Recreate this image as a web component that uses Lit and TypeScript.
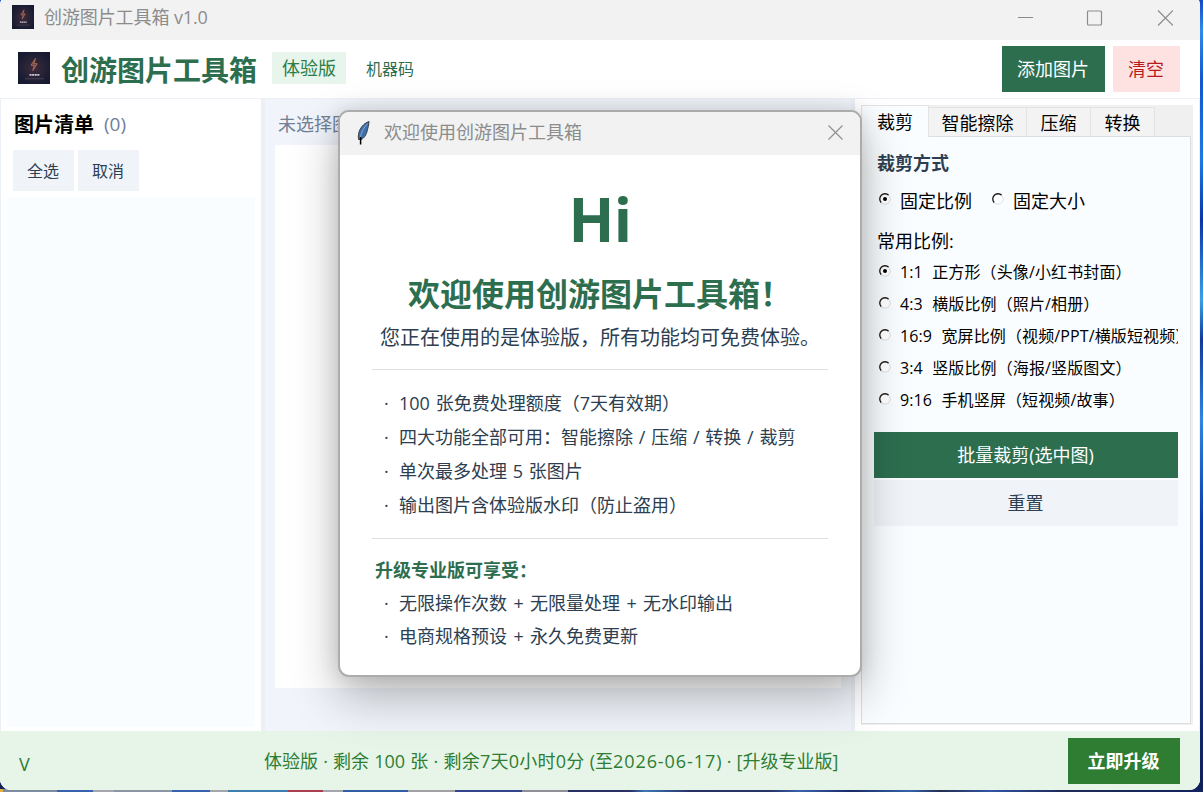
import { LitElement, html, css, svg } from "lit";
import { customElement, property } from "lit/decorators.js";

@customElement("app-logo")
class AppLogo extends LitElement {
  static styles = css`
    :host { display: block; }
    svg { display: block; width: 100%; height: 100%; }
  `;
  render() {
    return html`<svg viewBox="0 0 32 32" preserveAspectRatio="none">
      <defs><radialGradient id="g" r=".6"><stop offset="0" stop-color="#3d2b3d"/><stop offset="1" stop-color="#141a30"/></radialGradient></defs>
      <rect width="32" height="32" fill="url(#g)"/>
      <path d="M17.5 6.5 13 13.2 16.3 13.4 14.8 18.6 19.2 11.8 15.8 11.6Z" fill="#6d4142" stroke="#ad6c50" stroke-width="1"/>
      <path d="M11.5 22.8h10" stroke="#cfc8cc" stroke-width="1.7" stroke-dasharray="2.1 .5"/>
      <path d="M7 26.8h19" stroke="#5a5060" stroke-width=".7"/>
    </svg>`;
  }
}

@customElement("radio-option")
class RadioOption extends LitElement {
  @property({ type: Boolean }) checked = false;
  static styles = css`
    :host { display: flex; align-items: center; white-space: pre; }
    svg { width: 12px; height: 12px; flex: none; margin: 0 9px 4px 0; }
  `;
  render() {
    return html`<svg viewBox="0 0 12 12">
        <circle cx="6" cy="6" r="5.2" fill="#fff"/>
        <path d="M2.3 9.7A5.2 5.2 0 0 1 9.7 2.3" fill="none" stroke="#111" stroke-width="1.3"/>
        <path d="M9.7 2.3A5.2 5.2 0 0 1 2.3 9.7" fill="none" stroke="#dcdfe2" stroke-width="1"/>
        ${this.checked ? svg`<circle cx="6" cy="6" r="2" fill="#000"/>` : null}
      </svg><slot></slot>`;
  }
}

@customElement("welcome-dialog")
class WelcomeDialog extends LitElement {
  static styles = css`
    :host { display: flex; flex-direction: column; box-sizing: border-box; border: 2px solid #acacac; border-radius: 11px; background: #fff; overflow: hidden; color: #2c3e50; font-size: 18px; }
    .bar { display: flex; align-items: center; height: 43px; background: #f2f2f2; color: #8c8c8c; padding: 0 17px 2px 14px; box-sizing: border-box; flex: none; }
    .feather { width: 18px; height: 26px; margin-right: 12px; }
    .bar span { flex: 1; }
    .content { padding: 32px 32px 0; display: flex; flex-direction: column; }
    .hi { font-size: 60px; font-weight: 700; line-height: 64px; text-align: center; color: #2d6e4f; letter-spacing: -.5px; }
    h1 { margin: 22px 0 0; font-size: 32px; line-height: 42px; font-weight: 700; text-align: center; color: #2d6e4f; white-space: nowrap; }
    .sub { font-size: 20px; line-height: 28px; margin-top: 9px; text-align: center; white-space: nowrap; }
    .rule { height: 1px; background: #dfdfdf; }
    .rule.a { margin-top: 17px; }
    .rule.b { margin-top: 16px; }
    ul { list-style: none; margin: 16px 0 0; padding: 0 0 0 12px; line-height: 34px; word-spacing: 1.1px; }
    li { display: flex; white-space: pre; }
    li::before { content: "·"; width: 15px; }
    h2 { font-size: 18px; line-height: 34px; margin: 14px 0 0 3px; color: #2d6e4f; }
    ul.pro { margin-top: 0; line-height: 33px; word-spacing: 1.7px; }
  `;
  render() {
    return html`
      <div class="bar">
        <svg class="feather" viewBox="0 0 18 26">
          <path d="M15 1.5C11.5 2.5 8 5.5 6 9.5 4.4 12.8 4 16.5 4.6 19.5L7.2 19.5C10 18.5 12.4 14.5 13.3 10.5 14 7.5 14.8 5 15 1.5Z" fill="#3d6fae" stroke="#3a4048" stroke-width="1"/>
          <path d="M13.5 4C10.5 6.5 7.2 12 6.2 18" fill="none" stroke="#9fb6cf" stroke-width=".8"/>
          <path d="M6.6 17v7.5" fill="none" stroke="#000" stroke-width="1.5"/>
        </svg>
        <span>欢迎使用创游图片工具箱</span>
        <svg width="15" height="15" viewBox="0 0 15 15"><path d="M.5.5l14 14M14.5.5l-14 14" stroke="#909090" stroke-width="1.2"/></svg>
      </div>
      <div class="content">
        <div class="hi">Hi</div>
        <h1>欢迎使用创游图片工具箱！</h1>
        <div class="sub">您正在使用的是体验版，所有功能均可免费体验。</div>
        <div class="rule a"></div>
        <ul>
          <li>100 张免费处理额度（7天有效期）</li>
          <li>四大功能全部可用：智能擦除 / 压缩 / 转换 / 裁剪</li>
          <li>单次最多处理 5 张图片</li>
          <li>输出图片含体验版水印（防止盗用）</li>
        </ul>
        <div class="rule b"></div>
        <h2>升级专业版可享受：</h2>
        <ul class="pro">
          <li>无限操作次数 + 无限量处理 + 无水印输出</li>
          <li>电商规格预设 + 永久免费更新</li>
        </ul>
      </div>`;
  }
}

@customElement("app-root")
class AppRoot extends LitElement {
  static styles = css`
    :host { display: block; position: relative; width: 1203px; height: 792px; overflow: hidden; font-family: "Open Sans", "Noto Sans CJK SC", sans-serif; font-size: 18px; line-height: 1.36; color: #000;
      background: linear-gradient(90deg, #e0b040 0 3px, #7d8ba0 3px 57px, #3563b0 57px 93px, #a5a5ad 93px 114px, #8b95a5 114px 172px, #3563b0 172px 210px, #a5a5ad 210px 228px, #3d80b0 228px 288px, #a83e50 288px 323px, #a5a5ad 323px 343px, #2f5ea6 343px 408px, #a3a0a5 408px 455px, #33448c 455px 522px, #8f8f98 522px 568px, #283066 568px 630px, #3c78b8 645px, #283066 690px, #263468 770px, #3a62b0 800px, #1a2a66 850px, #3464ac 910px, #252d50 940px, #3155a8 990px, #202a58 1060px, #12245e 1200px) 0 100% / 1203px 3px no-repeat,
      linear-gradient(#1546c8, #2f8bea 30px, #1456d0 80px, #1c7be6 160px, #0b35a8 220px, #39a0e8 300px, #123a9c 340px, #2f86e0 420px, #0b3ca8 520px, #122a70 700px, #101f58); }
    .window { display: flex; flex-direction: column; width: 1200px; height: 796px; margin-top: -6px; border-radius: 11px; overflow: hidden; background: #fff; white-space: nowrap; }
    .titlebar { display: flex; align-items: center; height: 40px; padding: 6px 27px 0 12px; background: #f2f2f2; color: #8c8c8c; flex: none; box-sizing: content-box; }
    .titlebar app-logo { width: 22px; height: 24px; margin: -6px 10px 0 0; }
    .titlebar span { flex: 1; margin-top: -6px; letter-spacing: -.1px; }
    .titlebar svg { margin-top: -5px; }
    .header { display: flex; align-items: center; height: 58px; padding: 0 20px 0 18px; border-bottom: 1px solid #edf0f7; flex: none; }
    .header app-logo { width: 32px; height: 32px; margin-bottom: 2px; }
    .brand { font-size: 28px; font-weight: 700; color: #2d6e4f; margin: 2px 0 0 11px; line-height: 40px; }
    .badge { background: #e8f5ec; color: #2e7d46; height: 32px; line-height: 33px; width: 74px; text-indent: 10px; margin: 0 0 2px 15px; }
    .code { font-size: 16px; color: #2d6e4f; margin: 2px 0 0 20px; flex: 1; }
    .btn { display: flex; align-items: center; justify-content: center; box-sizing: border-box; padding-right: 1px; }
    .add { width: 103px; height: 46px; background: #2d6e4f; color: #fff; }
    .clear { width: 67px; height: 46px; background: #fee2e2; color: #b91c1c; margin-left: 8px; }
    .body { display: flex; height: 632px; flex: none; background: #ebeff6; padding: 0 1px; }
    .left { width: 260px; padding: 12px 6px 4px; box-sizing: border-box; background: #fff; display: flex; flex-direction: column; }
    .caption { display: flex; align-items: center; height: 28px; padding-left: 7px; font-size: 20px; font-weight: 700; }
    .caption span { font-size: 19px; font-weight: 400; color: #718096; margin-left: 10px; }
    .tools { display: flex; gap: 4px; margin: 11px 0 6px 6px; }
    .small { width: 61px; height: 41px; background: #f0f4f9; color: #2c3e50; font-size: 16px; padding-top: 2px; }
    .list { flex: 1; background: #fafdff; }
    .middle { width: 586px; margin: 0 4px; padding: 12px 10px 43px; box-sizing: border-box; background: #f1f5fb; color: #718096; display: flex; flex-direction: column; }
    .middle .hint { height: 34px; padding-left: 3px; line-height: 27px; }
    .canvas { flex: 1; background: #fff; }
    .right { flex: 1; background: #fff; padding: 6px 6px 6px; }
    .book { width: 332px; height: 620px; background: #f0f0f0; display: flex; flex-direction: column; box-sizing: border-box; padding: 0 2px 1px 0; }
    .tabs { display: flex; align-items: flex-end; height: 31px; }
    .tab { height: 29px; line-height: 31px; box-sizing: border-box; border: 1px solid #e3e3e3; border-width: 1px 1px 0 0; background: #f3f3f3; text-align: center; }
    .tab.on { height: 32px; line-height: 32px; width: 68px; background: #fafdff; border-left-width: 1px; margin-bottom: -1px; position: relative; }
    .w98 { width: 98px; } .w64 { width: 64px; }
    .pane { flex: 1; border: 1px solid #dedede; background: #fafdff; padding: 13px 12px 0; display: flex; flex-direction: column; }
    .pane h3 { font-size: 18px; line-height: 26px; margin: 0 0 0 3px; color: #2c3e50; }
    .modes { display: flex; gap: 20px; margin: 12px 0 0 5px; height: 26px; }
    .label { margin: 15px 0 2px 3px; height: 26px; }
    .ratios { font-size: 16px; overflow: hidden; letter-spacing: .12px; word-spacing: .4px; }
    .ratios radio-option { height: 32px; margin-left: 5px; }
    .run { height: 46px; background: #2d6e4f; color: #fff; margin: 15px 0 2px; }
    .reset { height: 46px; background: #f0f3f8; color: #2c3e50; }
    .footer { display: flex; align-items: center; height: 59px; background: #e7f5e8; color: #2e7d32; padding: 0 20px 0 19px; flex: none; }
    .arrow { font-size: 18px; font-weight: 500; width: 245px; padding-top: 7px; box-sizing: border-box; }
    .status { flex: 1; padding-top: 2px; word-spacing: .5px; white-space: pre; }
    .time { letter-spacing: .25px; }
    .date { letter-spacing: .92px; }
    .upgrade { width: 112px; height: 46px; background: #2e7d32; color: #fff; font-weight: 700; padding-top: 1px; }
    welcome-dialog { position: absolute; left: 338px; top: 110px; width: 524px; height: 567px; box-shadow: 0 20px 48px rgba(0,0,0,.28), 0 0 20px rgba(0,0,0,.12); white-space: nowrap; }
  `;
  render() {
    return html`
      <div class="window">
        <div class="titlebar">
          <app-logo></app-logo><span>创游图片工具箱 v1.0</span>
          <svg width="156" height="16" viewBox="0 0 156 16" fill="none" stroke="#8c8c8c" stroke-width="1.2">
            <path d="M1 7.5h15M141 .5l15 15M156 .5l-15 15"/><rect x="70.5" y="1" width="14" height="14" rx="1"/>
          </svg>
        </div>
        <div class="header">
          <app-logo></app-logo>
          <div class="brand">创游图片工具箱</div>
          <div class="badge">体验版</div>
          <div class="code">机器码</div>
          <div class="btn add">添加图片</div>
          <div class="btn clear">清空</div>
        </div>
        <div class="body">
          <div class="left">
            <div class="caption">图片清单<span>(0)</span></div>
            <div class="tools"><div class="btn small">全选</div><div class="btn small">取消</div></div>
            <div class="list"></div>
          </div>
          <div class="middle"><div class="hint">未选择图片</div><div class="canvas"></div></div>
          <div class="right">
            <div class="book">
              <div class="tabs">
                <div class="tab on">裁剪</div><div class="tab w98">智能擦除</div><div class="tab w64">压缩</div><div class="tab w64">转换</div>
              </div>
              <div class="pane">
                <h3>裁剪方式</h3>
                <div class="modes"><radio-option checked>固定比例</radio-option><radio-option>固定大小</radio-option></div>
                <div class="label">常用比例:</div>
                <div class="ratios">
                  <radio-option checked>1:1  正方形（头像/小红书封面）</radio-option>
                  <radio-option>4:3  横版比例（照片/相册）</radio-option>
                  <radio-option>16:9  宽屏比例（视频/PPT/横版短视频）</radio-option>
                  <radio-option>3:4  竖版比例（海报/竖版图文）</radio-option>
                  <radio-option>9:16  手机竖屏（短视频/故事）</radio-option>
                </div>
                <div class="btn run">批量裁剪(选中图)</div>
                <div class="btn reset">重置</div>
              </div>
            </div>
          </div>
        </div>
        <div class="footer">
          <div class="arrow">V</div>
          <div class="status">体验版 · 剩余 100 张 · <span class="time">剩余7天0小时0分</span> (至<span class="date">2026-06-17</span>) · [升级专业版]</div>
          <div class="btn upgrade">立即升级</div>
        </div>
      </div>
      <welcome-dialog></welcome-dialog>`;
  }
}
